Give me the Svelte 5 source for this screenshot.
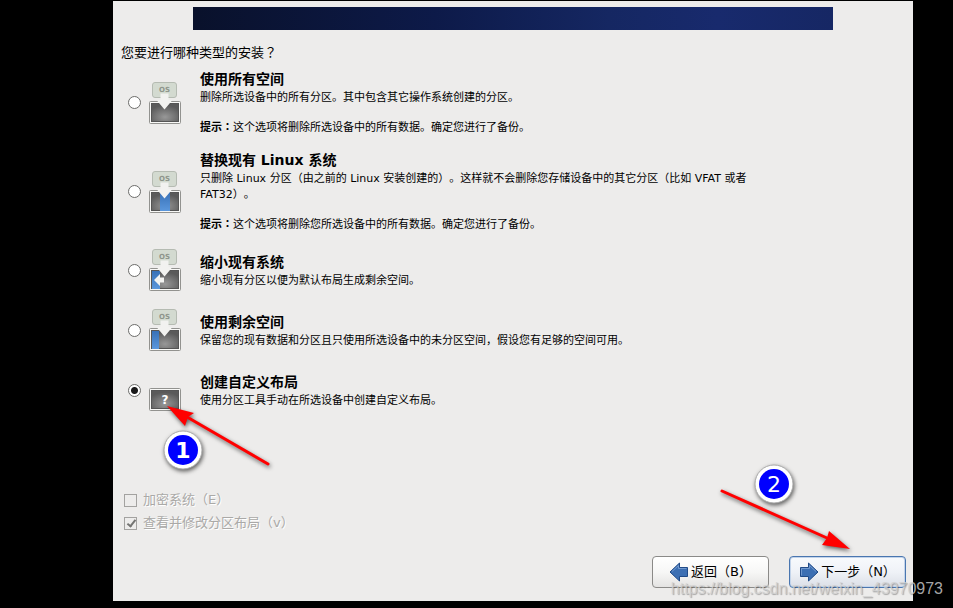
<script lang="ts">
	type Option = {
		id: string;
		title: string;
		text: string;
		hint?: string;
	};

	const options: Option[] = [
		{
			id: 'all',
			title: '使用所有空间',
			text: '删除所选设备中的所有分区。其中包含其它操作系统创建的分区。',
			hint: '这个选项将删除所选设备中的所有数据。确定您进行了备份。'
		},
		{
			id: 'replace',
			title: '替换现有 Linux 系统',
			text: '只删除 Linux 分区（由之前的 Linux 安装创建的）。这样就不会删除您存储设备中的其它分区（比如 VFAT 或者 FAT32）。',
			hint: '这个选项将删除您所选设备中的所有数据。确定您进行了备份。'
		},
		{
			id: 'shrink',
			title: '缩小现有系统',
			text: '缩小现有分区以便为默认布局生成剩余空间。'
		},
		{
			id: 'free',
			title: '使用剩余空间',
			text: '保留您的现有数据和分区且只使用所选设备中的未分区空间，假设您有足够的空间可用。'
		},
		{
			id: 'custom',
			title: '创建自定义布局',
			text: '使用分区工具手动在所选设备中创建自定义布局。'
		}
	];

	let selected = 'custom';
	let encrypt = false;
	let review = true;
</script>

<main class="window">
	<div class="banner"></div>

	<h1 id="question">您要进行哪种类型的安装<span class="mid">？</span></h1>

	<div class="options" role="radiogroup" aria-labelledby="question">
		{#each options as option}
			<label class="option">
				<input type="radio" name="install" value={option.id} bind:group={selected} />
				<svg class="disk" width="34" height="42" viewBox="0 0 34 42" aria-hidden="true">
					<defs>
						<radialGradient id="metal-{option.id}" cx="50%" cy="75%" r="65%">
							<stop offset="0" stop-color="#989898" />
							<stop offset="1" stop-color="#5a5a5a" />
						</radialGradient>
						<linearGradient id="blue-{option.id}" x1="0" y1="0" x2="0" y2="1">
							<stop offset="0" stop-color="#3871b7" />
							<stop offset="1" stop-color="#5b97dc" />
						</linearGradient>
					</defs>
					{#if option.id !== 'custom'}
						<rect x="4.5" y="0.5" width="24" height="15" rx="2.5" fill="#d3dad0" stroke="#b5bbb2" />
						<text x="16.5" y="10" text-anchor="middle">OS</text>
					{/if}
					<rect x="1.5" y="19.5" width="31" height="22" rx="1" fill="#f8f8f6" stroke="#92928f" />
					<rect x="3.5" y="21.5" width="27" height="18" fill="url(#metal-{option.id})" stroke="#555" />
					{#if option.id === 'replace'}
						<rect x="12" y="21" width="10" height="19" fill="url(#blue-{option.id})" />
					{:else if option.id === 'shrink'}
						<rect x="4" y="22" width="8" height="18" fill="url(#blue-{option.id})" />
						<path d="M6 31 L12 25 V28.500 H16 V33.500 H12 V37 Z" fill="#f2f2f0" />
					{:else if option.id === 'free'}
						<rect x="4" y="22" width="7" height="18" fill="url(#blue-{option.id})" />
					{/if}
					{#if option.id === 'custom'}
						<text class="unknown" x="17" y="35" text-anchor="middle">?</text>
					{:else}
						<path d="M12.500 11.500 H20.500 V18 H24.500 L16.500 27.500 L8.500 18 H12.500 Z" fill="#f2f2f0" />
					{/if}
				</svg>
				<span class="info">
					<strong class="title">{option.title}</strong>
					<span class="text">{option.text}</span>
					{#if option.hint}
						<span class="text hint"><b>提示<span class="mid">：</span></b>{option.hint}</span>
					{/if}
				</span>
			</label>
		{/each}
	</div>

	<div class="checks">
		<label><input type="checkbox" bind:checked={encrypt} disabled />加密系统（E）</label>
		<label><input type="checkbox" bind:checked={review} disabled />查看并修改分区布局（v）</label>
	</div>

	<div class="buttons">
		<button type="button">
			<svg width="20" height="20" viewBox="0 0 20 20" aria-hidden="true">
				<path d="M1 10 L10.500 1 V5.500 H18.500 V14.500 H10.500 V19 Z" fill="#3c6fb3" stroke="#204a87" />
				<path d="M3 9.500 L9.500 3.500 V6.500 H17.500" fill="none" stroke="#7199cf" />
			</svg>
			返回（B）
		</button>
		<button type="button" class="primary">
			<svg width="20" height="20" viewBox="0 0 20 20" aria-hidden="true">
				<path d="M19 10 L9.500 1 V5.500 H1.500 V14.500 H9.500 V19 Z" fill="#3c6fb3" stroke="#204a87" />
				<path d="M2.500 13.500 V6.500 H10.500 V3.500 L17 9.500" fill="none" stroke="#7199cf" />
			</svg>
			下一步（N）
		</button>
	</div>

	<svg class="mark first" width="130" height="90" viewBox="155 395 130 90">
		<g class="shadow">
			<path d="M187 417 L268 464" stroke="#f00" stroke-width="3" stroke-linecap="round" />
			<path d="M167 406 L194 413 L188 417 L185 426 Z" fill="#f00" />
		</g>
		<circle class="shadow" cx="183" cy="450" r="19" fill="#fff" stroke="#aaa" />
		<circle cx="183" cy="450" r="15" fill="#00f" />
		<text x="183" y="458" text-anchor="middle">1</text>
	</svg>
	<svg class="mark second" width="150" height="100" viewBox="713 460 150 100">
		<g class="shadow">
			<path d="M722 491 L827 538" stroke="#f00" stroke-width="3" stroke-linecap="round" />
			<path d="M850 549 L829 531 L827 538 L822 545 Z" fill="#f00" />
		</g>
		<circle class="shadow" cx="774" cy="484" r="19" fill="#fff" stroke="#aaa" />
		<circle cx="774" cy="484" r="15" fill="#00f" />
		<text x="774" y="492" text-anchor="middle">2</text>
	</svg>
</main>

<div class="watermark">https://blog.csdn.net/weixin_43970973</div>

<style>
	:global(body) {
		background: #000;
	}
	.window {
		position: relative;
		display: flex;
		flex-direction: column;
		box-sizing: border-box;
		min-height: calc(100vh - 7px);
		margin: 0 40px 0 113px;
		border-top: 1px solid #000;
		padding: 6px 7px 13px 8px;
		background: #edeceb;
		color: #000;
		font: 13px/20px 'DejaVu Sans', 'Noto Sans CJK SC', sans-serif;
		text-spacing-trim: space-all;
	}
	.banner {
		height: 23px;
		margin: 0 73px 0 72px;
		background: linear-gradient(90deg, #09112b, #0d1a49 38%, #152762 65%, #182a6d 82%, #162764);
	}
	h1 {
		margin: 13px 0 6px;
		font: inherit;
	}
	.mid {
		font-family: 'Noto Sans CJK TC', sans-serif;
		line-height: 1;
	}
	.options {
		display: flex;
		flex-direction: column;
		gap: 14px;
	}
	.option {
		display: flex;
		align-items: center;
		min-height: 46px;
		padding-left: 7px;
	}
	input {
		appearance: none;
		flex: none;
		box-sizing: border-box;
		width: 13px;
		height: 13px;
		margin: 0;
		border: 1px solid #6c6c6a;
		background: #fff;
	}
	input[type='radio'] {
		border-radius: 50%;
	}
	input[type='radio']:checked {
		background: radial-gradient(circle, #1a1a1a 3px, #fff 4px);
	}
	.disk {
		flex: none;
		margin: 0 18px 0 7px;
	}
	.disk text {
		font: bold 7px 'DejaVu Sans', sans-serif;
		fill: #8e958b;
	}
	.disk .unknown {
		font-size: 12px;
		fill: #fff;
	}
	.info {
		display: flex;
		flex-direction: column;
		max-width: 560px;
	}
	.title {
		font-size: 14px;
		line-height: 21px;
	}
	.text {
		font-size: 11px;
		line-height: 16px;
	}
	.hint {
		margin-top: 14px;
	}
	.checks {
		display: flex;
		flex-direction: column;
		gap: 3px;
		margin-top: auto;
		padding: 40px 0 23px 3px;
		color: #aaa9a7;
		text-shadow: 1px 1px #fff;
	}
	.checks label {
		display: flex;
		align-items: center;
		gap: 6px;
	}
	.checks input {
		border-color: #a3a2a0;
		background: #edeceb;
	}
	.checks input:checked::after {
		content: '';
		display: block;
		box-sizing: border-box;
		width: 5px;
		height: 9px;
		margin: 0 0 0 4px;
		border: solid #747472;
		border-width: 0 2px 2px 0;
		transform: rotate(38deg);
	}
	.buttons {
		display: flex;
		justify-content: flex-end;
		gap: 20px;
	}
	button {
		display: flex;
		align-items: center;
		justify-content: center;
		gap: 2px;
		box-sizing: border-box;
		width: 117px;
		height: 32px;
		padding: 0;
		border: 1px solid #8b8a88;
		border-radius: 4px;
		background: linear-gradient(#fff, #f7f7f6 50%, #e4e3e2);
		color: #000;
		font: inherit;
	}
	.primary {
		border-color: #4a76b0;
		background: linear-gradient(#f8fafd, #eff2f7 50%, #dbdfe7);
		box-shadow: inset 0 0 0 1px #c3d4ea;
	}
	.mark {
		position: absolute;
		pointer-events: none;
	}
	.first {
		left: 42px;
		top: 394px;
	}
	.second {
		right: 50px;
		bottom: 41px;
	}
	.mark text {
		font: bold 22px 'DejaVu Sans', sans-serif;
		fill: #fff;
	}
	.mark.second text {
		font-weight: normal;
	}
	.shadow {
		filter: drop-shadow(1px 2px 2px rgba(0, 0, 0, 0.6));
	}
	.watermark {
		position: absolute;
		right: 10px;
		bottom: 9px;
		color: rgba(210, 210, 210, 0.8);
		font: 16px/20px 'Liberation Sans', Arial, sans-serif;
		text-shadow: 1px 1px 1px rgba(0, 0, 0, 0.3);
		pointer-events: none;
	}
</style>
